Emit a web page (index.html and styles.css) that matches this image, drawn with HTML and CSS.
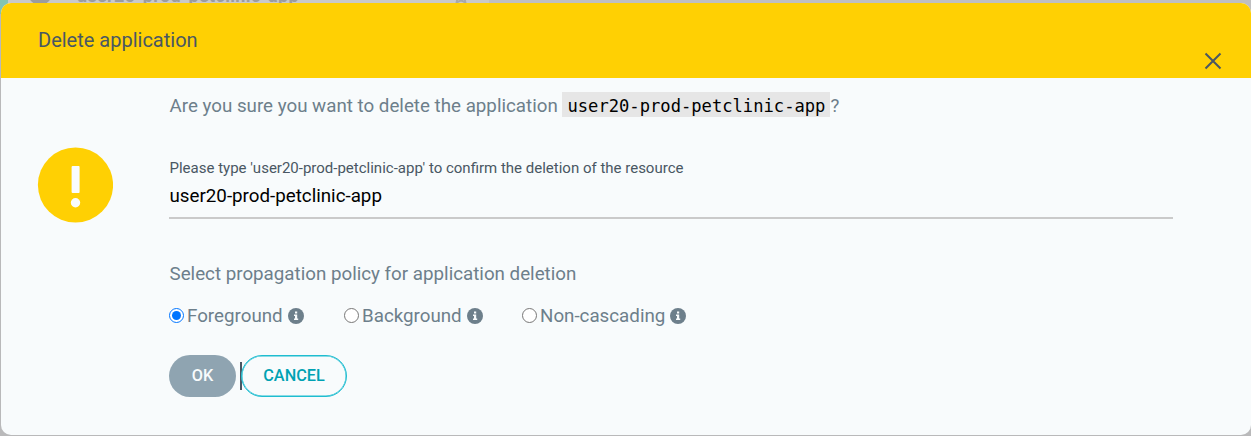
FILE: index.html
```
<!DOCTYPE html>
<html lang="en">
<head>
<meta charset="utf-8">
<title>Delete application</title>
<link rel="stylesheet" href="styles.css">
</head>
<body>
<div class="backdrop">
  <div class="row-strip">
    <span class="row-globe"></span>
    <span class="row-name">user20-prod-petclinic-app</span>
    <svg class="row-star" viewBox="0 0 16 16"><path d="M8 1l2.100 4.600 5 .6-3.700 3.400 1 5L8 12.200 3.600 14.600l1-5L.9 6.200l5-.6z"/></svg>
  </div>
</div>
<div class="popup">
  <header class="popup-title">
    <h1>Delete application</h1>
    <svg class="close" viewBox="0 0 18 18"><path d="M1.500 1.500l15 15M16.500 1.500l-15 15"/></svg>
  </header>
  <div class="popup-body">
    <svg class="warning" viewBox="0 0 76 76">
      <circle cx="38.500" cy="38" r="37.600" fill="#ffd003"/>
      <rect x="34.600" y="19" width="8" height="27" rx="1" fill="#f9fcfd"/>
      <circle cx="38.500" cy="55.700" r="4.700" fill="#f9fcfd"/>
    </svg>
    <form class="content">
      <p class="question">Are you sure you want to delete the application <code>user20-prod-petclinic-app</code>?</p>
      <label class="field">
        <span class="field-label">Please type 'user20-prod-petclinic-app' to confirm the deletion of the resource</span>
        <input class="field-input" type="text" value="user20-prod-petclinic-app">
      </label>
      <p class="policy-title">Select propagation policy for application deletion</p>
      <div class="policies">
        <label class="policy policy-fg"><input type="radio" name="policy" checked><span>Foreground</span><svg class="info" viewBox="0 0 16 16"><circle cx="8" cy="8" r="8"/><path d="M7 3.500h2.200v2H7zM6 6.500h3.200v4h1v1.500H6v-1.500h1V8H6z"/></svg></label>
        <label class="policy policy-bg"><input type="radio" name="policy"><span>Background</span><svg class="info" viewBox="0 0 16 16"><circle cx="8" cy="8" r="8"/><path d="M7 3.500h2.200v2H7zM6 6.500h3.200v4h1v1.500H6v-1.500h1V8H6z"/></svg></label>
        <label class="policy"><input type="radio" name="policy"><span>Non-cascading</span><svg class="info" viewBox="0 0 16 16"><circle cx="8" cy="8" r="8"/><path d="M7 3.500h2.200v2H7zM6 6.500h3.200v4h1v1.500H6v-1.500h1V8H6z"/></svg></label>
      </div>
      <div class="actions">
        <button class="btn btn-ok" type="button">OK</button>
        <span class="caret"></span>
        <button class="btn btn-cancel" type="button">CANCEL</button>
      </div>
    </form>
  </div>
</div>
</body>
</html>
```
FILE: styles.css
```
* { box-sizing: border-box; }
body {
  margin: 0;
  height: 436px;
  overflow: hidden;
  padding: 3px 0 0 1px;
  background: #b9b9ba;
  font-family: Roboto, sans-serif;
  font-size: 18.75px;
  color: #6d7f8b;
}
h1, p { margin: 0; font-weight: 400; }

/* Dimmed application list behind the dialog */
.backdrop {
  position: absolute;
  inset: 0 0 auto 0;
  height: 14px;
  overflow: hidden;
  background: #bfbfc1;
}
.row-strip {
  position: relative;
  width: 489px;
  height: 14px;
  background: #c9c9ca;
  border-left: 8px solid #83c4b2;
}
.row-globe {
  position: absolute;
  left: 20px;
  top: -19px;
  width: 24px;
  height: 24px;
  border: 7px solid #9b9c9e;
  border-radius: 50%;
}
.row-name {
  position: absolute;
  left: 69px;
  top: -14px;
  font-size: 18px;
  line-height: 20px;
  font-weight: 700;
  letter-spacing: .35px;
  color: #9b9c9e;
}
.row-star {
  position: absolute;
  left: 445px;
  top: -12px;
  width: 16px;
  height: 16px;
  fill: none;
  stroke: #a7a8aa;
  stroke-width: 2;
}

.popup {
  position: relative;
  width: 1250px;
  height: 432px;
  border-radius: 10px;
  overflow: hidden;
  background: #f8fbfc;
}
.popup-title {
  display: flex;
  justify-content: space-between;
  height: 75px;
  padding: 25px 29.5px 0 37px;
  background: #ffd003;
  color: #495763;
}
.popup-title h1 {
  font-size: 20px;
  line-height: 24px;
}
.close {
  width: 18px;
  height: 18px;
  margin-top: 24px;
  stroke: #495763;
  stroke-width: 2;
}
.popup-body { display: flex; padding-left: 36px; }
.warning { width: 76px; height: 76px; margin-top: 69px; flex: none; }
.content { width: 1004px; margin-left: 56px; }
.question {
  display: flex;
  height: 39px;
  padding: 16px 0 0 .5px;
  line-height: 24px;
  white-space: pre;
}
.question code {
  height: 25px;
  margin-top: -2px;
  padding: 0 5px;
  line-height: 29px;
  background: #e6e6e6;
  color: #000;
  font-family: "DejaVu Sans Mono", monospace;
  font-size: 17.15px;
}
.field { display: block; margin-top: 41px; }
.field-label {
  display: block;
  padding-left: .5px;
  font-size: 15px;
  line-height: 20px;
  color: #495763;
}
.field-input {
  display: block;
  width: 100%;
  height: 41px;
  padding: 0 0 4px .5px;
  border: 0;
  border-bottom: 2px solid #cacaca;
  background: transparent;
  font: 18.75px Roboto, sans-serif;
  color: #000;
}
.policy-title { margin-top: 43px; padding-left: .5px; line-height: 24px; }
.policies { display: flex; margin-top: 18px; line-height: 24px; }
.policy { display: flex; align-items: center; }
.policy-fg { width: 174px; }
.policy-fg input[type="radio"] { margin-left: 0; }
.policy-bg { width: 178px; }
.policy input { width: 15px; height: 15px; margin: 0 3px 1px 1px; }
.info { width: 16px; height: 16px; margin-left: 5px; fill: #6d7f8b; }
.info path { fill: #f8fbfc; }
.actions { display: flex; align-items: center; margin-top: 27px; }
.btn {
  height: 42px;
  padding: 0 0 2px;
  border-radius: 21px;
  font: 500 16.25px Roboto, sans-serif;
}
.btn-ok { width: 67px; border: 0; background: #8fa4b1; color: #f8fbfc; }
.caret { width: 2px; height: 28px; margin: 0 -1px 0 4px; background: #495763; }
.btn-cancel {
  width: 106px;
  border: 1px solid #1fbdd0;
  box-shadow: inset 0 0 0 .5px #1fbdd0;
  background: #f8fbfc;
  color: #00a2b3;
}
```
